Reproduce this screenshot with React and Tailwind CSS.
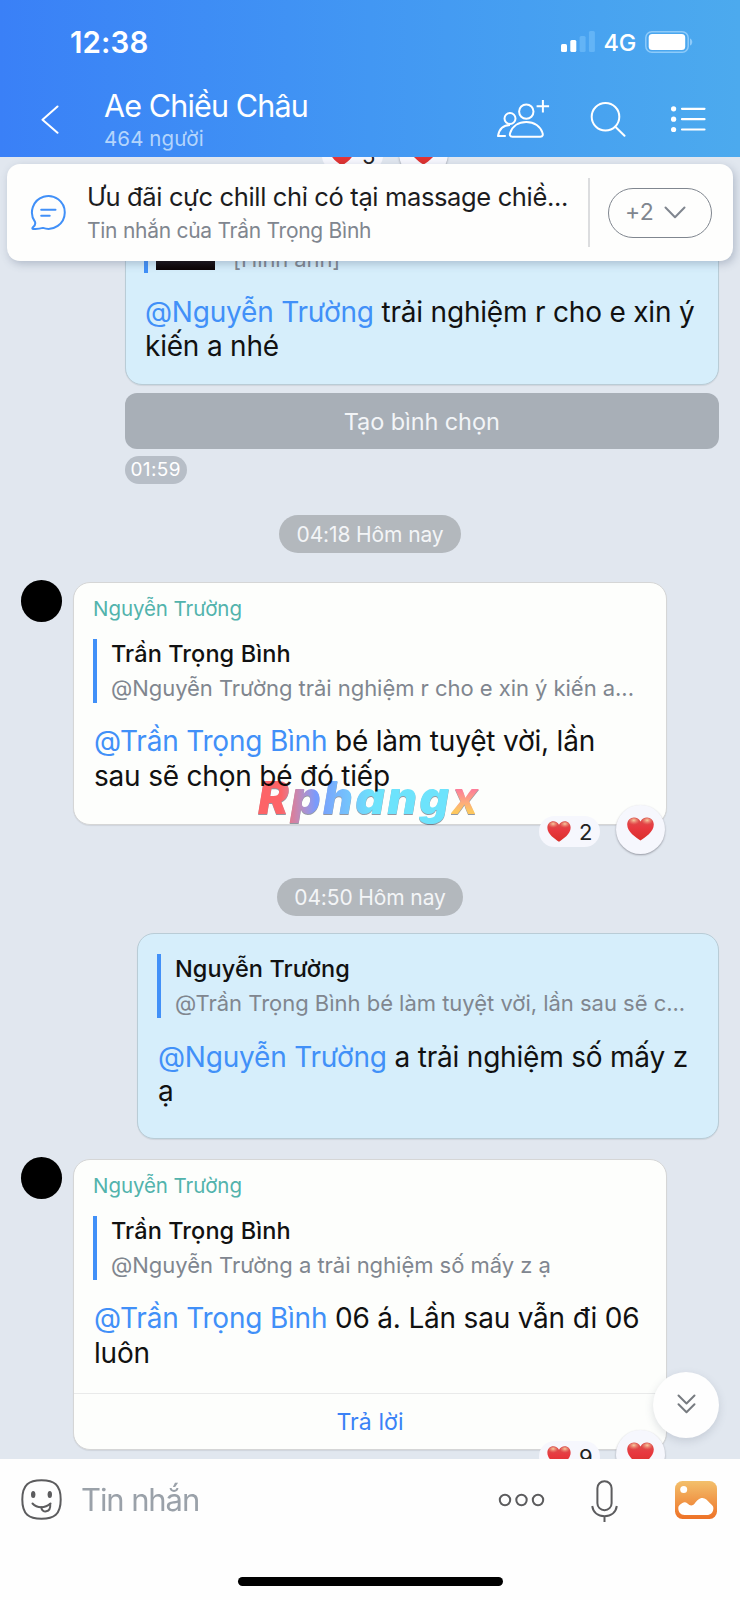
import React from 'react';

const HeartIcon = ({ className }) => (
  <svg viewBox="0 0 27 24" className={className}>
    <defs>
      <linearGradient id="heartBase" x1="0" y1="0" x2="0" y2="1">
        <stop offset="0" stopColor="#d9534f" />
        <stop offset="0.45" stopColor="#e8383f" />
        <stop offset="1" stopColor="#d92f2a" />
      </linearGradient>
      <radialGradient id="heartShine" cx="0.5" cy="0.3" r="0.6">
        <stop offset="0" stopColor="#f9d3a4" stopOpacity="0.95" />
        <stop offset="1" stopColor="#f08a78" stopOpacity="0" />
      </radialGradient>
    </defs>
    <path
      d="M13.5 23.6C9 20.6 0.2 15 0.2 7.6 0.2 3.4 3.2 0.4 7 0.4c2.8 0 5.2 1.500 6.500 4 1.300-2.500 3.700-4 6.500-4 3.800 0 6.800 3 6.800 7.200 0 7.400-8.800 13-13.300 16z"
      fill="url(#heartBase)"
    />
    <ellipse cx="6.800" cy="4.800" rx="5.200" ry="3.800" fill="url(#heartShine)" />
    <ellipse cx="20.200" cy="4.800" rx="5.200" ry="3.800" fill="url(#heartShine)" />
  </svg>
);

const Reactions = ({ count }) => (
  <div className="flex items-center gap-[16px]">
    <div className="mt-[4px] flex h-[31px] w-[61px] items-center rounded-full bg-[#f6f7fd] pl-2">
      <HeartIcon className="h-[21px] w-[24px]" />
      <span className="ml-[8px] text-[22px] leading-none text-[#222]">{count}</span>
    </div>
    <div className="flex size-[49px] items-center justify-center rounded-full bg-[#f6f7fd] shadow-[0_1px_2px_rgba(60,60,70,0.45)]">
      <HeartIcon className="-mt-[1px] h-[24px] w-[27px]" />
    </div>
  </div>
);

const Quote = ({ name, text, tracking }) => (
  <div className="flex h-16 items-center border-l-4 border-[#4190f8] pl-[14px] whitespace-nowrap">
    <div className="leading-[34px]">
      <div className="text-[23.5px] font-medium tracking-[0.1px] text-[#111]">{name}</div>
      <div className={`text-[22px] text-[#80868f] ${tracking}`}>{text}</div>
    </div>
  </div>
);

const Message = ({ mention, children }) => (
  <p className="mt-[21.500px] text-[28px] leading-[34.7px] tracking-[-0.2px] whitespace-nowrap text-[#111]">
    <span className="text-[#4190f8]">{mention}</span> {children}
  </p>
);

const DatePill = ({ className, children }) => (
  <div className={`flex h-[38px] items-center justify-center self-center rounded-full bg-[#b3b8bd] pt-[1px] text-[21px] tracking-[-0.12px] text-[#f3f5f7] ${className}`}>
    {children}
  </div>
);

const Incoming = ({ name, className, children }) => (
  <div className={`flex items-start pl-[20.5px] ${className}`}>
    <div className="-mt-[1.5px] size-[41.5px] shrink-0 rounded-full bg-black" />
    <div className="relative ml-[11px] h-full w-[594px] rounded-[17px] border-[1.5px] border-[#d5d6d6] bg-[#fdfefc] pt-[11px] shadow-[0_1px_1px_rgba(0,0,0,0.08)]">
      <div className="pl-[19px]">
        <div className="mb-[17px] text-[20.5px] leading-7 tracking-[-0.07px] text-[#52b3ac]"><span className="relative top-[1px]">{name}</span></div>
        {children[0]}
        <div className="pl-[1px]">{children[1]}</div>
      </div>
      {children[2]}
    </div>
  </div>
);

const Header = () => (
  <header className="h-[157px] shrink-0 bg-linear-to-r from-[#3a80f7] via-[#4297f3] to-[#4caaee] text-white">
    <div className="flex h-[84px] items-center justify-between pr-[47px] pl-[70px]">
      <div className="mt-[1px] text-[29.500px] font-semibold tracking-[0.1px]">12:38</div>
      <div className="flex items-center">
        <svg className="h-[22px] w-[34px]" viewBox="0 0 34 22" fill="#fff">
          <rect x="0" y="13" width="6" height="8" rx="1.500" />
          <rect x="9.300" y="9" width="6" height="12" rx="1.500" />
          <rect x="18.600" y="5" width="6" height="16" rx="1.500" fill="#63b4f6" />
          <rect x="27.900" y="0" width="6" height="21" rx="1.500" fill="#63b4f6" />
        </svg>
        <span className="mt-[1px] ml-[9px] text-[23.5px] font-medium tracking-[-0.3px]">4G</span>
        <svg className="ml-[9px] h-[22px] w-[48px]" viewBox="0 0 48 22" fill="none">
          <rect x="0.800" y="0.800" width="42.400" height="20.400" rx="6" stroke="#8ecbfa" strokeWidth="1.500" />
          <rect x="3.700" y="3" width="36.500" height="16" rx="3.500" fill="#fff" />
          <path d="M45 7.500c3 1 3 6 0 7z" fill="#8ecbfa" />
        </svg>
      </div>
    </div>
    <div className="flex items-start">
      <svg className="mt-[21px] ml-[41px] h-[29px] w-[18px]" viewBox="0 0 18 29" fill="none" stroke="#fff" strokeWidth="2">
        <path d="M16.500 1.500 1.500 14.800l15 13" strokeLinecap="round" strokeLinejoin="round" />
      </svg>
      <div className="ml-[45px] w-[300px] whitespace-nowrap">
        <div className="mt-[2px] text-[30.5px] leading-[40px] tracking-[-0.85px]">Ae Chiều Châu</div>
        <div className="-mt-[1px] text-[20.5px] leading-[28px] tracking-[0.1px] text-[#b4d5fc]">464 người</div>
      </div>
      <svg className="mt-[15px] ml-[93px] h-[40px] w-[53px]" viewBox="0 0 53 40" fill="none" stroke="#fff" strokeWidth="2">
        <circle cx="29.300" cy="12.600" r="7.200" />
        <circle cx="13" cy="19.500" r="5.500" />
        <path d="M15.500 37.800C12.500 37.800 12.600 35.500 13.200 33.800 15.300 27.500 21.200 23 29.300 23s14.200 4.500 16.200 10.800c.6 1.700.6 4-2.200 4z" strokeLinejoin="round" />
        <path d="M13 26C6.500 26 2.200 30.300 1 37h7.800" strokeLinejoin="round" />
        <path d="M45.900 1v12.500M39.600 7.300h12.500" />
      </svg>
      <svg className="mt-[17px] ml-[40px] h-[36px] w-[36px]" viewBox="0 0 36 36" fill="none" stroke="#fff" strokeWidth="2">
        <circle cx="15.500" cy="15.800" r="13.800" />
        <path d="m25.300 25.700 9.200 9" strokeLinecap="round" />
      </svg>
      <svg className="mt-[22px] ml-[45px] h-[27px] w-[35px]" viewBox="0 0 35 27" stroke="#fff" strokeWidth="2.200" strokeLinecap="round">
        <g fill="#fff" stroke="none">
          <circle cx="2.600" cy="2.800" r="2.600" />
          <circle cx="2.600" cy="13.200" r="2.600" />
          <circle cx="2.600" cy="23.500" r="2.600" />
        </g>
        <path d="M11 2.800h22.500M11 13.200h22.500M11 23.500h22.500" />
      </svg>
    </div>
  </header>
);

const PinnedBanner = () => (
  <div className="absolute top-[7px] right-[7px] left-[7px] flex h-[97px] items-center rounded-[13px] bg-[#fefefd] shadow-[2px_3px_8px_rgba(70,85,115,0.3)]">
    <svg className="ml-[23px] h-[37px] w-[37px]" viewBox="0 0 37 37" fill="none" stroke="#4190f8" strokeWidth="2" strokeLinecap="round" strokeLinejoin="round">
      <path d="M5 27.900A16.400 16.400 0 1 1 13 33.900C9.500 34.900 6 35.200 3 34.900 2.200 34.800 2.100 34 2.800 33.400 4.800 31.900 5.700 30 5 27.900z" />
      <path d="M11.200 15.800h14.300M11.200 21.700h8.500" />
    </svg>
    <div className="mt-[2px] ml-[20px] w-[501px] whitespace-nowrap">
      <div className="text-[25.5px] leading-[34px] tracking-[-0.36px] text-[#1c1c1e]">Ưu đãi cực chill chỉ có tại massage chiề...</div>
      <div className="text-[21px] leading-[34px] tracking-[-0.27px] text-[#80868f]">Tin nhắn của Trần Trọng Bình</div>
    </div>
    <div className="h-[69px] w-[1.5px] bg-[#dcdddf]" />
    <div className="ml-[18.500px] flex h-[50px] w-[104px] items-center rounded-full border-[1.5px] border-[#80868f] pl-[16px] text-[23px] tracking-[0.3px] text-[#80868f]">
      +2
      <svg className="ml-[10px] h-[13px] w-[22px]" viewBox="0 0 22 13" fill="none" stroke="#80868f" strokeWidth="2" strokeLinecap="round" strokeLinejoin="round">
        <path d="m1.500 1.500 9.500 9.700 9.500-9.700" />
      </svg>
    </div>
  </div>
);

const Watermark = () => (
  <div className="pointer-events-none absolute top-[186px] left-[184px] text-[46px] leading-[56px] font-black tracking-[2.3px] whitespace-nowrap italic mix-blend-multiply drop-shadow-[0_1.5px_0.5px_rgba(60,70,90,0.55)]">
    <span className="bg-linear-to-r from-[#ff6468] from-12% via-[#7a9bff] via-30% to-[#6ee4ff] to-60% bg-clip-text text-transparent">Rphang</span>
    <span className="bg-linear-to-b from-[#ff7a9c] from-35% to-[#ffc860] to-75% bg-clip-text pr-1 font-bold text-transparent">x</span>
  </div>
);

const Chat = () => (
  <main className="relative flex-1 overflow-hidden bg-[#e1e7ef]">
    <div className="flex flex-col">
      <div className="-mt-[28px] ml-[322px] h-[63px]">
        <Reactions count={5} />
      </div>

      <div className="ml-[124.500px] flex h-[193px] w-[594.500px] flex-col rounded-[17px] border-[1.500px] border-[#b9ccd6] bg-[#d6eefb] pt-[19px] pl-[18.500px] shadow-[0_1px_1px_rgba(0,0,0,0.08)]">
        <div className="flex h-[61px] border-l-4 border-[#4190f8]">
          <div className="ml-2 h-[58px] w-[59px] bg-linear-to-b from-[#2a0c0c] to-[#0b0304]" />
          <div className="ml-[18px] self-end text-[22px] leading-7 tracking-[-0.1px] text-[#80868f]">[Hình ảnh]</div>
        </div>
        <div className="pl-[1px]">
          <Message mention="@Nguyễn Trường">trải nghiệm r cho e xin ý<br />kiến a nhé</Message>
        </div>
      </div>
      <div className="mt-2 ml-[124.5px] flex h-14 w-[594.5px] items-center justify-center rounded-[12px] bg-[#a8afb7] pt-[1px] text-[23.5px] tracking-[-0.09px] text-[#f3f5f7]">
        Tạo bình chọn
      </div>
      <div className="mt-[7px] ml-[124.5px] flex h-7 w-[62.5px] items-center justify-center rounded-full bg-[#b7bec7] text-[19px] tracking-[0.4px] text-white">
        01:59
      </div>

      <DatePill className="mt-[31px] w-[182px]">04:18 Hôm nay</DatePill>

      <Incoming name="Nguyễn Trường" className="mt-[28.500px] h-[243.500px]">
        <Quote name="Trần Trọng Bình" text="@Nguyễn Trường trải nghiệm r cho e xin ý kiến a..." tracking="tracking-[-0.04px]" />
        <Message mention="@Trần Trọng Bình">bé làm tuyệt vời, lần<br />sau sẽ chọn bé đó tiếp</Message>
        <>
          <Watermark />
          <div className="absolute right-[1px] -bottom-[30px]"><Reactions count={2} /></div>
        </>
      </Incoming>

      <DatePill className="mt-[53px] w-[186px]">04:50 Hôm nay</DatePill>

      <div className="mt-[17px] ml-[137px] h-[206px] w-[582px] rounded-[17px] border-[1.500px] border-[#b9ccd6] bg-[#d6eefb] pt-5 pl-[19px] shadow-[0_1px_1px_rgba(0,0,0,0.08)]">
        <Quote name="Nguyễn Trường" text="@Trần Trọng Bình bé làm tuyệt vời, lần sau sẽ c..." tracking="tracking-[-0.02px]" />
        <div className="pl-[1px]">
          <Message mention="@Nguyễn Trường">a trải nghiệm số mấy z<br />ạ</Message>
        </div>
      </div>

      <Incoming name="Nguyễn Trường" className="mt-[19.500px] h-[291.500px]">
        <Quote name="Trần Trọng Bình" text="@Nguyễn Trường a trải nghiệm số mấy z ạ" tracking="tracking-[-0.02px]" />
        <Message mention="@Trần Trọng Bình">06 á. Lần sau vẫn đi 06<br />luôn</Message>
        <>
          <div className="mt-[23px] flex h-[56px] items-center justify-center border-t border-[#e9eaea] pt-[1px] text-[23px] tracking-[0.1px] text-[#3b82f6]">Trả lời</div>
          <div className="absolute right-[1px] -bottom-[30px]"><Reactions count={9} /></div>
        </>
      </Incoming>
    </div>

    <PinnedBanner />

    <button className="absolute right-[21px] bottom-[21px] flex size-[66px] items-center justify-center rounded-full bg-[#fefefe] shadow-[0_3px_8px_rgba(90,100,120,0.2)]">
      <svg className="-mt-[2px] h-[20px] w-[19px]" viewBox="0 0 19 20" fill="none" stroke="#777b80" strokeWidth="2" strokeLinecap="round" strokeLinejoin="round">
        <path d="m1.500 1.500 8 8 8-8M1.500 10.300l8 8 8-8" />
      </svg>
    </button>
  </main>
);

const Composer = () => (
  <footer className="flex h-[141px] shrink-0 flex-col bg-[#fefefe]">
    <div className="flex h-[82px] items-center pr-[23px] pl-[21px]">
      <svg className="-mt-[1px] h-[41px] w-[41px]" viewBox="0 0 41 41" fill="none" stroke="#5c5c5e" strokeWidth="2" strokeLinecap="round">
        <path d="M20.500 1.300C33 1.300 39.700 5.500 39.700 20.500S33 39.700 20.500 39.700 1.300 35.500 1.300 20.500 8 1.300 20.500 1.300z" />
        <ellipse cx="12.200" cy="15.500" rx="2.200" ry="3.500" fill="#5c5c5e" stroke="none" />
        <ellipse cx="28.800" cy="15.500" rx="2.200" ry="3.500" fill="#5c5c5e" stroke="none" />
        <path d="M11.500 24.500C16 29.500 24 29.500 29.500 24.500" />
        <path d="M20.300 28.300C20.800 34.600 30 33.800 29.200 25.300" />
      </svg>
      <div className="ml-[19px] flex-1 text-[31px] tracking-[-1.1px] text-[#9aa1a9]">Tin nhắn</div>
      <svg className="-mt-[1px] h-[14px] w-[47px]" viewBox="0 0 47 14" fill="none" stroke="#5c5c5e" strokeWidth="2">
        <circle cx="7" cy="7" r="5.200" />
        <circle cx="23.500" cy="7" r="5.200" />
        <circle cx="40" cy="7" r="5.200" />
      </svg>
      <svg className="mt-[1px] ml-[46px] h-[42px] w-[27px]" viewBox="0 0 27 42" fill="none" stroke="#5c5c5e" strokeWidth="2">
        <rect x="6.400" y="1.200" width="14.200" height="29" rx="7" />
        <path d="M1.200 26C2.200 32.500 7 36.300 13.500 36.300S24.800 32.500 25.800 26M13.500 36.300V42" />
      </svg>
      <svg className="-mt-[1px] ml-[57px] h-[38px] w-[42px]" viewBox="0 0 42 38">
        <defs>
          <linearGradient id="photoBg" x1="0" y1="0" x2="0" y2="1">
            <stop offset="0" stopColor="#f3c06c" />
            <stop offset="1" stopColor="#ee7227" />
          </linearGradient>
        </defs>
        <rect width="42" height="38" rx="7.500" fill="url(#photoBg)" />
        <circle cx="8.700" cy="8.600" r="3.500" fill="#fff" />
        <path d="M3.300 27C3.300 25.500 4 24.600 5.200 23.500 7.500 21.300 10 20 12.500 22.500 15 25 17.500 25 19.500 22.700 22 19.500 24 17 27.500 17c3 0 5 2.500 6.800 4.500C36.500 24 38.400 24.500 38.400 27c0 4.500-2.800 7-6.500 7H9.500C5.500 34 3.300 31 3.300 27z" fill="#fff" />
      </svg>
    </div>
    <div className="mt-[36px] h-[9px] w-[265px] self-center rounded-full bg-black" />
  </footer>
);

export default function App() {
  return (
    <div className="flex h-[1600px] w-[740px] flex-col overflow-hidden font-[Inter,sans-serif]">
      <Header />
      <Chat />
      <Composer />
    </div>
  );
}
